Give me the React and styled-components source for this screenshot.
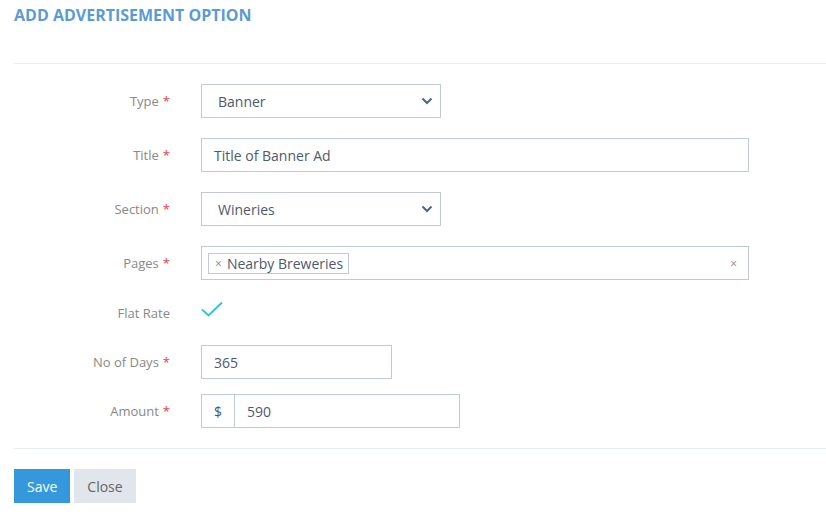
import React from "react";
import styled, { createGlobalStyle } from "styled-components";

const Global = createGlobalStyle`
  html, body { margin: 0; padding: 0; background: #fff; }
  body { font-family: "Open Sans", "Liberation Sans", sans-serif; }
  * { box-sizing: border-box; }
`;

const Page = styled.div`
  padding-left: 14px;
  width: 826px;
`;

const Header = styled.div`
  height: 64px;
  padding-top: 4px;
  border-bottom: 1px solid #e7ecf1;
`;

const Title = styled.h4`
  margin: 0;
  font-size: 16px;
  font-weight: 700;
  color: #5b9bd5;
  line-height: 22px;
`;

const Body = styled.div`
  padding: 20px 0 20px;
  border-bottom: 1px solid #e7ecf1;
  display: flex;
  flex-direction: column;
`;

const Row = styled.div`
  display: grid;
  grid-template-columns: 187px 1fr;
  align-items: center;
  min-height: ${(p) => p.$h || 34}px;
  margin-bottom: ${(p) => (p.$mb === undefined ? 20 : p.$mb)}px;
`;

const Label = styled.label`
  text-align: right;
  padding-right: 31px;
  font-size: 13px;
  color: #888;
`;

const Req = styled.span`
  color: #e73d4a;
  margin-left: 4px;
`;

const Box = styled.div`
  width: ${(p) => p.$w}px;
  height: 34px;
  border: 1px solid #c2cad8;
  display: flex;
  align-items: center;
  font-size: 14px;
  color: #4e5a6b;
  padding: 0 ${(p) => p.$pr || 12}px 0 ${(p) => p.$pl || 12}px;
  background: #fff;
`;

const Grow = styled.span`
  flex: 1;
`;

const Tag = styled.span`
  display: inline-flex;
  align-items: center;
  height: 21px;
  border: 1px solid #c2cad8;
  padding: 0 5px 0 6px;
  font-size: 14px;
  color: #4e5a6b;
  margin-left: -6px;
`;

const TagX = styled.span`
  color: #888;
  font-size: 12px;
  margin-right: 5px;
`;

const ClearX = styled.span`
  color: #888;
  font-size: 12px;
  margin-right: 1px;
`;

const Group = styled.div`
  display: flex;
  width: ${(p) => p.$w}px;
  height: 34px;
  border: 1px solid #c2cad8;
  font-size: 14px;
  color: #4e5a6b;
`;

const Addon = styled.span`
  width: 33px;
  border-right: 1px solid #c2cad8;
  display: flex;
  align-items: center;
  padding-left: 12px;
`;

const GroupInput = styled.span`
  display: flex;
  align-items: center;
  padding-left: 12px;
`;

const Check = styled.div`
  display: flex;
  align-items: flex-start;
  height: 25px;
  padding-top: 1px;
`;

const Footer = styled.div`
  padding-top: 20px;
  display: flex;
  gap: 4px;
`;

const Button = styled.button`
  height: 34px;
  border: none;
  padding: 0 13px;
  font-family: "Open Sans", "Liberation Sans", sans-serif;
  font-size: 14px;
  background: ${(p) => (p.$primary ? "#3598dc" : "#e1e5ec")};
  color: ${(p) => (p.$primary ? "#fff" : "#666")};
  cursor: pointer;
`;

const Chevron = () => (
  <svg width="12" height="8" viewBox="0 0 12 8">
    <path d="M1.5 1.5 L6 6 L10.5 1.5" stroke="#4a6785" strokeWidth="2" fill="none" />
  </svg>
);

export default function App() {
  return (
    <>
      <Global />
      <Page>
        <Header>
          <Title>ADD ADVERTISEMENT OPTION</Title>
        </Header>
        <Body>
          <Row>
            <Label>Type<Req>*</Req></Label>
            <Box $w={240} $pl={16} $pr={7}>
              <Grow>Banner</Grow>
              <Chevron />
            </Box>
          </Row>
          <Row>
            <Label>Title<Req>*</Req></Label>
            <Box $w={548}>Title of Banner Ad</Box>
          </Row>
          <Row>
            <Label>Section<Req>*</Req></Label>
            <Box $w={240} $pl={16} $pr={7}>
              <Grow>Wineries</Grow>
              <Chevron />
            </Box>
          </Row>
          <Row>
            <Label>Pages<Req>*</Req></Label>
            <Box $w={548} $pr={10}>
              <Grow>
                <Tag><TagX>×</TagX>Nearby Breweries</Tag>
              </Grow>
              <ClearX>×</ClearX>
            </Box>
          </Row>
          <Row $h={25}>
            <Label>Flat Rate</Label>
            <Check>
              <svg width="22" height="16" viewBox="0 0 22 16">
                <path d="M1 8.5 L7.5 14.5 L21 1.5" stroke="#36c6d3" strokeWidth="2" fill="none" />
              </svg>
            </Check>
          </Row>
          <Row $mb={15}>
            <Label>No of Days<Req>*</Req></Label>
            <Box $w={191}>365</Box>
          </Row>
          <Row $mb={0}>
            <Label>Amount<Req>*</Req></Label>
            <Group $w={259}>
              <Addon>$</Addon>
              <GroupInput>590</GroupInput>
            </Group>
          </Row>
        </Body>
        <Footer>
          <Button $primary>Save</Button>
          <Button>Close</Button>
        </Footer>
      </Page>
    </>
  );
}
